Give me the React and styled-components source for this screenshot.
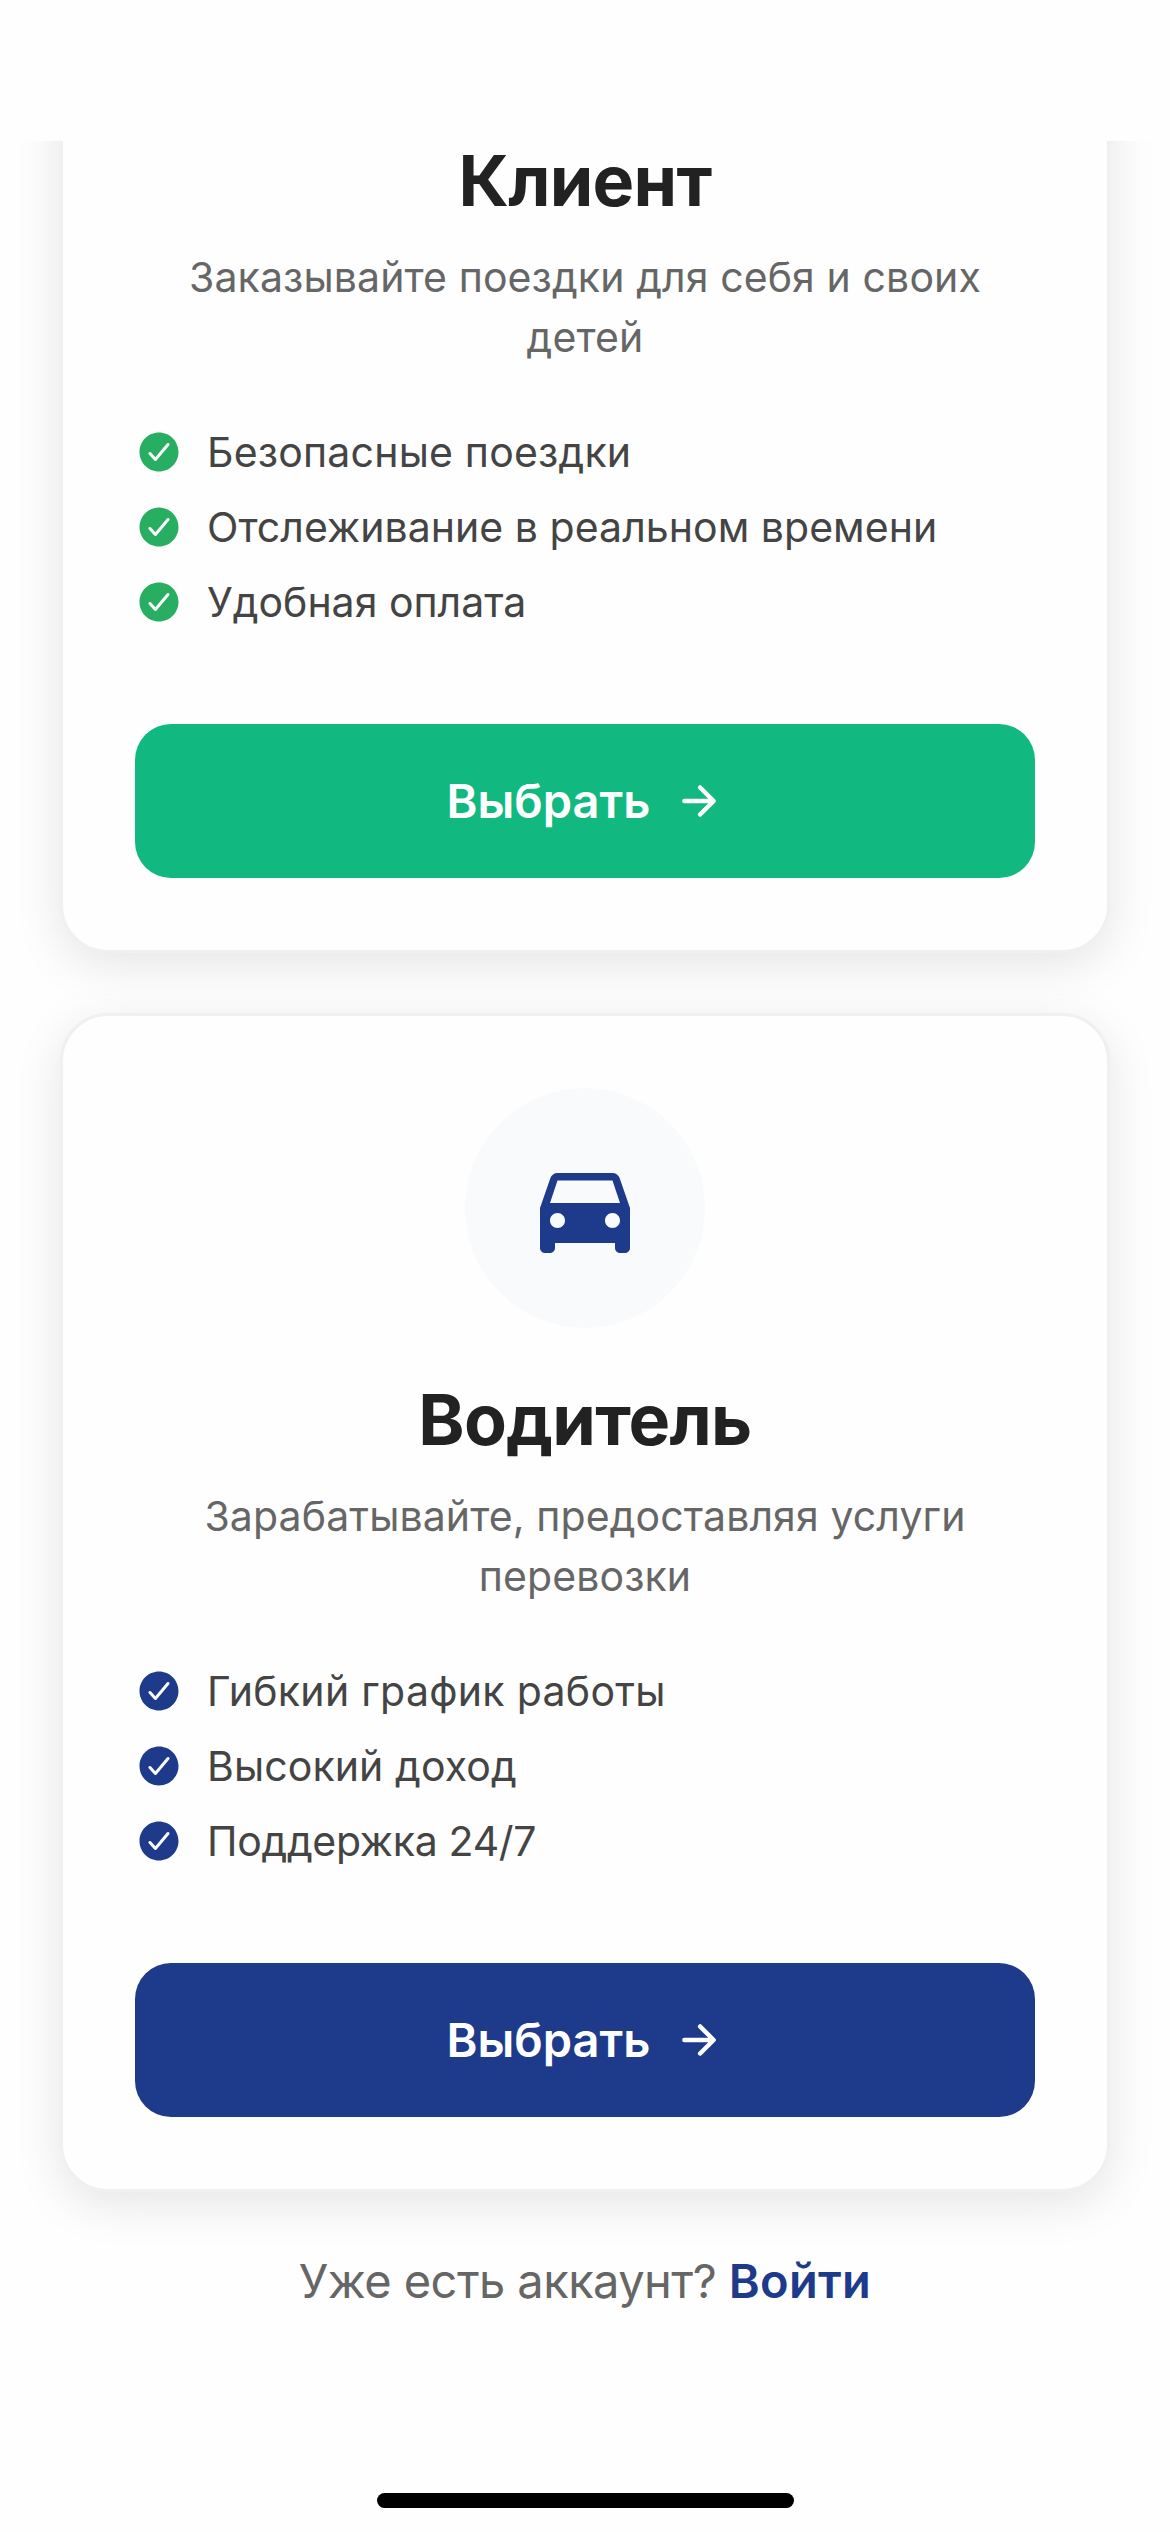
import React from "react";
import styled, { createGlobalStyle } from "styled-components";

const Global = createGlobalStyle`
  * { box-sizing: border-box; }
  body { margin: 0; background: #fefefe; font-family: Inter, "Liberation Sans", sans-serif; }
`;
const Screen = styled.main`
  width: 1170px;
  height: 2532px;
  overflow: hidden;
  background: #fefefe;
  display: flex;
  flex-direction: column;
`;
const StatusArea = styled.div`
  height: 141px;
  flex: none;
`;
const Content = styled.div`
  flex: 1;
  min-height: 0;
  overflow: hidden;
  padding: 0 60px;
  display: flex;
  flex-direction: column;
`;
const Cards = styled.div`
  flex: none;
  margin-top: -367px;
  display: flex;
  flex-direction: column;
  gap: 60px;
`;
const Card = styled.section`
  height: 1179px;
  background: #fefefe;
  border: 3px solid #f0f0f0;
  border-radius: 48px;
  padding: 72px;
  box-shadow: 0 12px 48px rgba(0, 0, 0, 0.1);
  display: flex;
  flex-direction: column;
  align-items: center;
`;
const Badge = styled.div`
  width: 240px;
  height: 240px;
  flex: none;
  border-radius: 50%;
  background: #f8fafc;
  display: flex;
  align-items: center;
  justify-content: center;
`;
const Title = styled.h2`
  margin: 48px 0 0;
  font-size: 70px;
  line-height: 87px;
  font-weight: 700;
  letter-spacing: -0.7px;
  color: #222;
  white-space: nowrap;
`;
const Description = styled.p`
  margin: 23px 0 0;
  text-align: center;
  font-size: 41px;
  line-height: 60px;
  letter-spacing: 0.11px;
  color: #666;
  white-space: pre-line;
`;
const List = styled.ul`
  list-style: none;
  margin: 60px 0 0;
  padding: 0;
  width: 100%;
  display: flex;
  flex-direction: column;
  gap: 25px;
`;
const Item = styled.li`
  height: 50px;
  display: flex;
  align-items: center;
  gap: 24px;
  font-size: 41px;
  line-height: 50px;
  letter-spacing: ${p => p.$tracking}px;
  color: #444;
  white-space: nowrap;
`;
const Button = styled.button`
  margin: auto 0 0;
  padding: 0;
  width: 100%;
  height: 154px;
  border: 0;
  border-radius: 36px;
  background: ${p => p.$color};
  color: #fefefe;
  font: 600 47px/58px Inter, "Liberation Sans", sans-serif;
  display: flex;
  align-items: center;
  justify-content: center;
  gap: 25px;
`;
const Footer = styled.p`
  margin: 59px 0 0;
  text-align: center;
  font-size: 47px;
  line-height: 59px;
  letter-spacing: -0.55px;
  color: #666;
  white-space: nowrap;
`;
const Link = styled.a`
  color: #1e3a8a;
  font-weight: 600;
  letter-spacing: 0.3px;
`;
const HomeArea = styled.div`
  flex: none;
  height: 39px;
  display: flex;
  justify-content: center;
`;
const HomeIndicator = styled.div`
  width: 417px;
  height: 15px;
  border-radius: 8px;
  background: #000;
`;

function Check({ color }) {
  return (
    <svg width="48" height="48" viewBox="0 0 512 512">
      <path fill={color} d="M256 48C141.310 48 48 141.310 48 256s93.310 208 208 208 208-93.310 208-208S370.690 48 256 48zm108.250 138.290l-134.400 160a16 16 0 01-12 5.710h-.27a16 16 0 01-11.890-5.300l-57.600-64a16 16 0 1123.780-21.400l45.290 50.320 122.590-145.910a16 16 0 0124.500 20.580z" />
    </svg>
  );
}

function Arrow() {
  return (
    <svg width="48" height="48" viewBox="0 0 512 512">
      <path d="M268 112l144 144-144 144M392 256H100" fill="none" stroke="#fefefe" strokeWidth="48" strokeLinecap="round" strokeLinejoin="round" />
    </svg>
  );
}

function Car() {
  return (
    <svg width="120" height="120" viewBox="0 0 24 24">
      <path fill="#1e3a8a" d="M18.92 6.01C18.72 5.42 18.16 5 17.5 5h-11c-.66 0-1.21.42-1.42 1.01L3 12v8c0 .55.45 1 1 1h1c.55 0 1-.45 1-1v-1h12v1c0 .55.45 1 1 1h1c.55 0 1-.45 1-1v-8l-2.08-5.99zM6.5 16c-.83 0-1.500-.67-1.500-1.500S5.670 13 6.500 13s1.500.67 1.500 1.500S7.330 16 6.500 16zm11 0c-.83 0-1.500-.67-1.500-1.500s.67-1.500 1.500-1.500 1.500.67 1.500 1.500-.67 1.500-1.500 1.500zM5 11l1.500-4.500h11L19 11H5z" />
    </svg>
  );
}

function Role({ title, description, items, color, checkColor, icon }) {
  return (
    <Card>
      <Badge>{icon}</Badge>
      <Title>{title}</Title>
      <Description>{description}</Description>
      <List>
        {items.map(({ text, tracking }) => (
          <Item key={text} $tracking={tracking}>
            <Check color={checkColor} />
            {text}
          </Item>
        ))}
      </List>
      <Button $color={color}>
        Выбрать
        <Arrow />
      </Button>
    </Card>
  );
}

const clientItems = [
  { text: "Безопасные поездки", tracking: 0.2 },
  { text: "Отслеживание в реальном времени", tracking: 0.04 },
  { text: "Удобная оплата", tracking: 0 },
];
const driverItems = [
  { text: "Гибкий график работы", tracking: 0.3 },
  { text: "Высокий доход", tracking: 0.1 },
  { text: "Поддержка 24/7", tracking: -0.3 },
];

export default function App() {
  return (
    <>
      <Global />
      <Screen>
        <StatusArea />
        <Content>
          <Cards>
            <Role
              title="Клиент"
              description={"Заказывайте поездки для себя и своих\nдетей"}
              items={clientItems}
              color="#11b981"
              checkColor="#27ae60"
            />
            <Role
              title="Водитель"
              description={"Зарабатывайте, предоставляя услуги\nперевозки"}
              items={driverItems}
              color="#1e3a8a"
              checkColor="#1e3a8a"
              icon={<Car />}
            />
          </Cards>
          <Footer>
            Уже есть аккаунт? <Link>Войти</Link>
          </Footer>
        </Content>
        <HomeArea>
          <HomeIndicator />
        </HomeArea>
      </Screen>
    </>
  );
}
